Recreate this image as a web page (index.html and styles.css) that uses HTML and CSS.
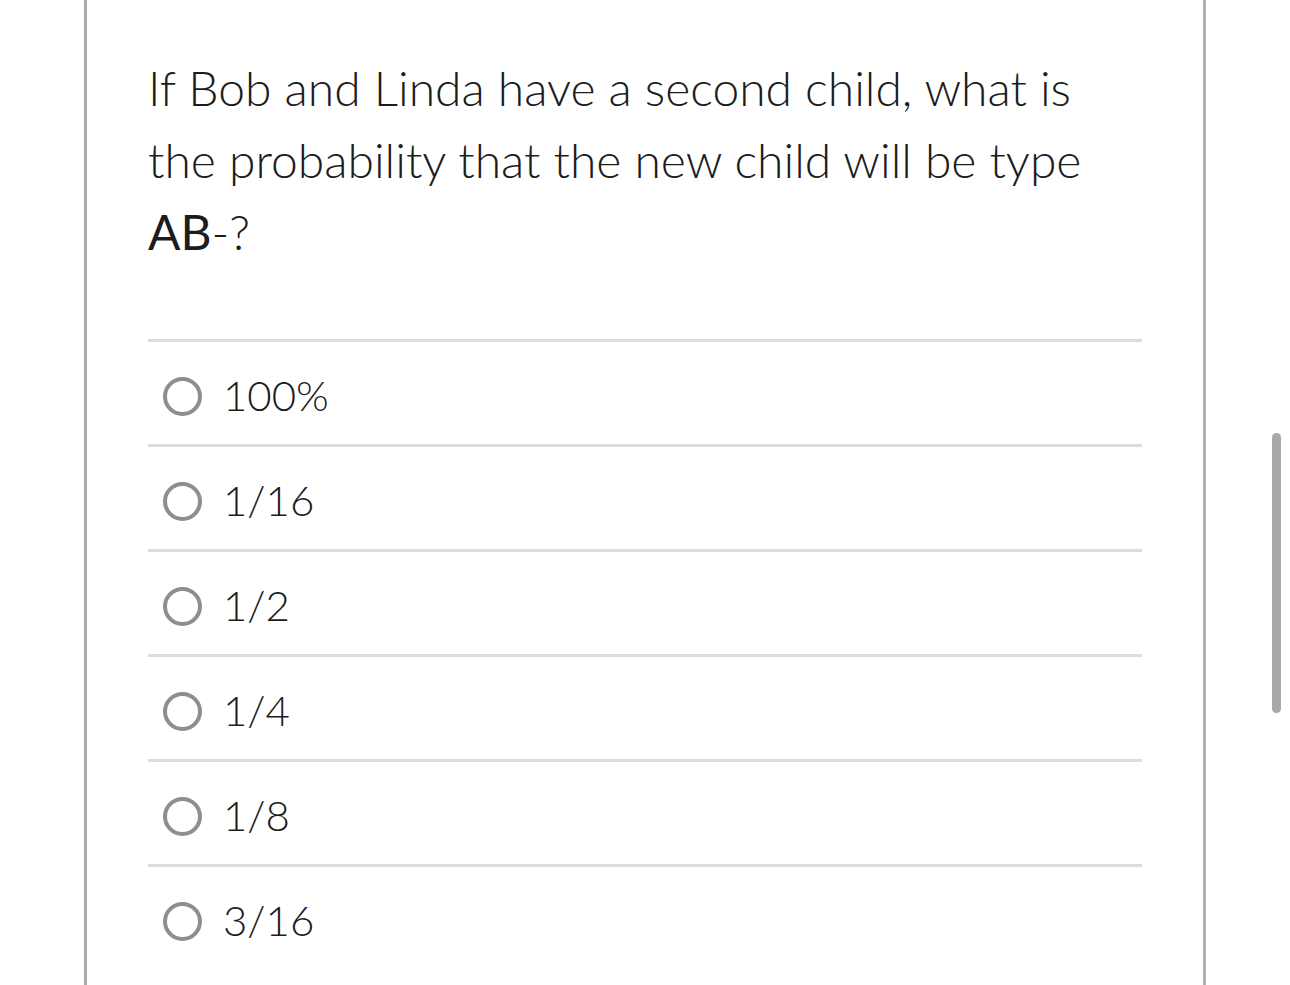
FILE: index.html
```html
<!DOCTYPE html>
<html>
<head>
<meta charset="utf-8">
<link rel="stylesheet" href="styles.css">
</head>
<body>
<div class="page">
  <div class="card">
    <p class="question">If Bob and Linda have a second child, what is the probability that the new child will be type <span class="strong">AB</span>-?</p>
    <ul class="options">
      <li class="option"><span class="radio"></span><span class="label">100%</span></li>
      <li class="option"><span class="radio"></span><span class="label">1/16</span></li>
      <li class="option"><span class="radio"></span><span class="label">1/2</span></li>
      <li class="option"><span class="radio"></span><span class="label">1/4</span></li>
      <li class="option"><span class="radio"></span><span class="label">1/8</span></li>
      <li class="option"><span class="radio"></span><span class="label">3/16</span></li>
    </ul>
  </div>
  <div class="scroll-thumb"></div>
</div>
</body>
</html>
```
FILE: styles.css
```css
html, body {
  margin: 0;
  padding: 0;
  background: #ffffff;
  height: 100%;
  overflow: hidden;
}
.page {
  position: relative;
  height: 985px;
  overflow: hidden;
  font-family: "Lato", "Open Sans", sans-serif;
  color: #1c1c1c;
}
.card {
  margin-left: 84px;
  min-height: 1200px;
  border-left: 3px solid #ababab;
  border-right: 3px solid #b0b0b0;
  padding: 52px 61px 0 61px;
  box-sizing: content-box;
  width: 994px;
}
.question {
  margin: 0;
  font-size: 48px;
  font-weight: 300;
  line-height: 72px;
}
.strong {
  font-weight: 400;
}
.options {
  list-style: none;
  margin: 71px 0 0 0;
  padding: 0;
}
.option {
  height: 102px;
  border-top: 3px solid #dcdcdc;
  display: flex;
  align-items: center;
  padding-left: 15px;
}
.radio {
  width: 31px;
  height: 31px;
  border: 4.5px solid #8e8e8e;
  border-radius: 50%;
  margin-top: 6px;
  flex: none;
}
.label {
  margin-left: 21px;
  font-size: 42px;
  font-weight: 300;
  margin-top: 4px;
}
.scroll-thumb {
  position: absolute;
  left: 1272px;
  top: 433px;
  width: 9px;
  height: 280px;
  border-radius: 5px;
  background: #a8a8a8;
}
```
